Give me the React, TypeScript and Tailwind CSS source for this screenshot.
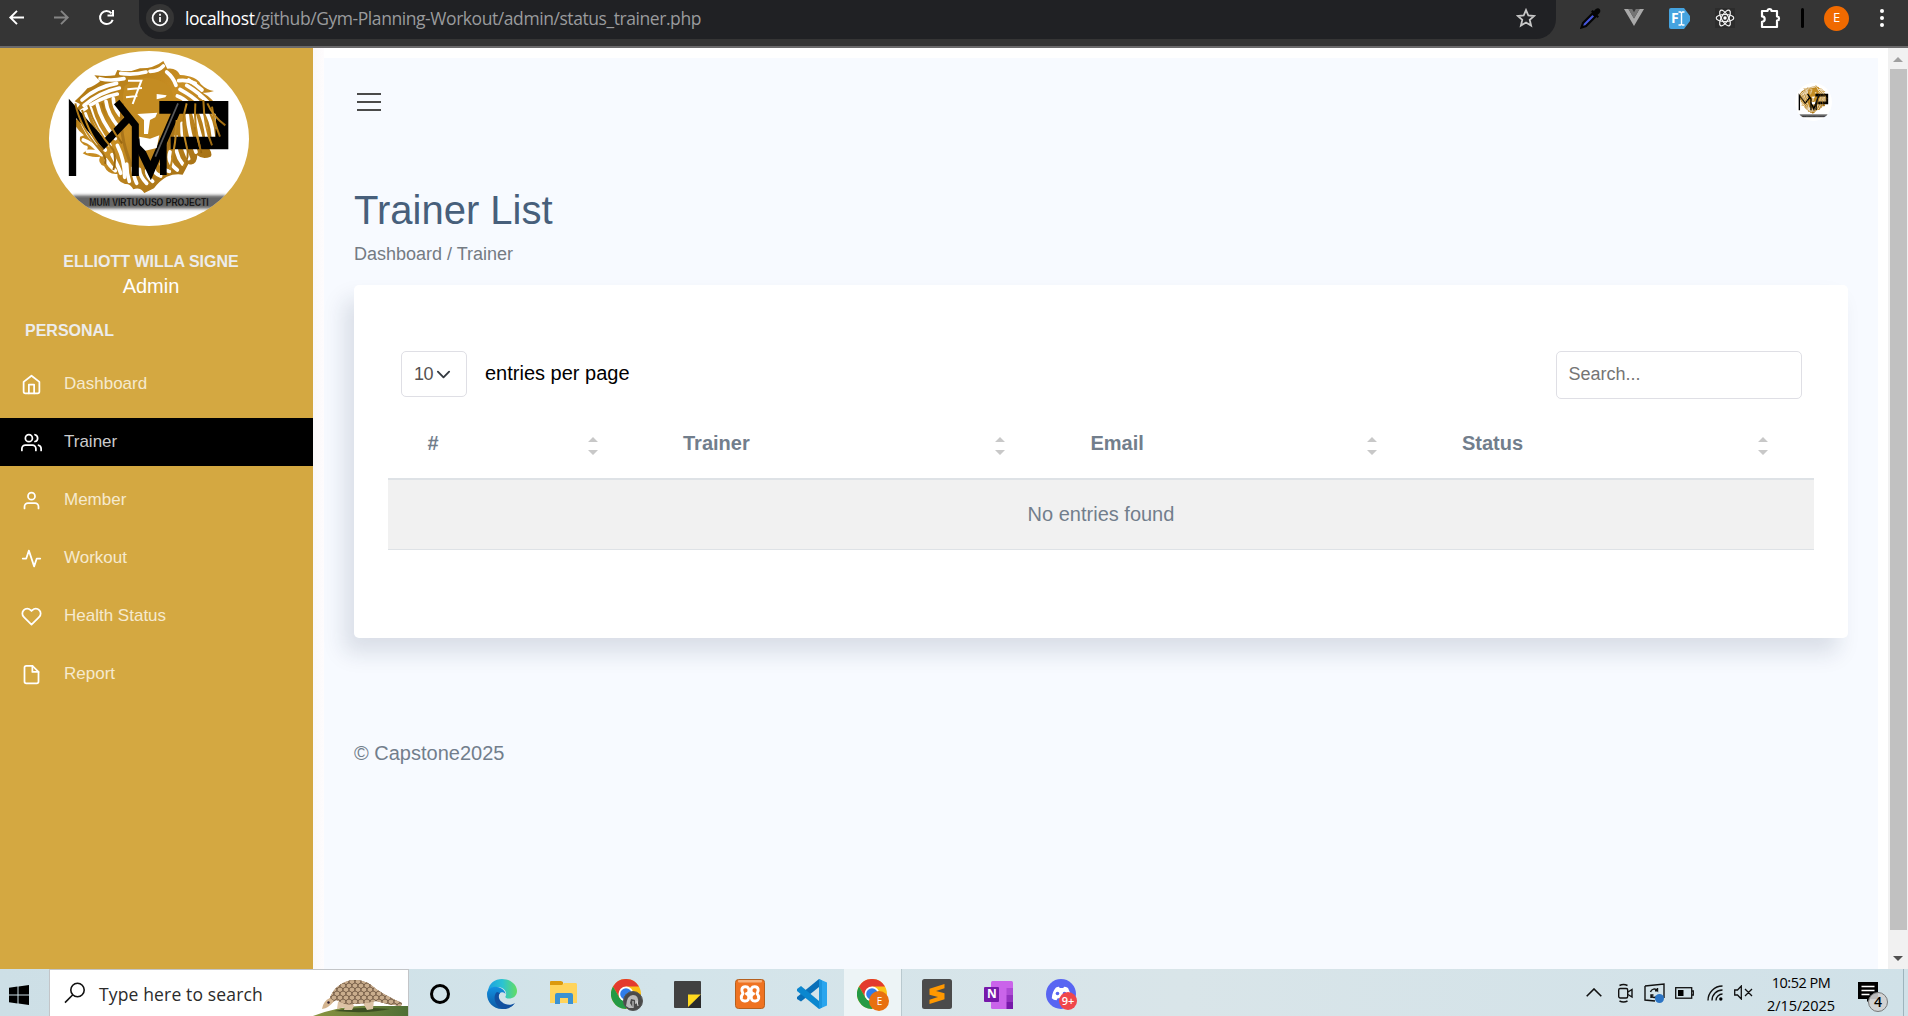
import React from 'react';

const SANS = "font-['Liberation_Sans',Arial,sans-serif]";
const UI = "font-['Open_Sans','Noto_Sans',sans-serif]";

const manePath =
  'M490 63 L502 86 Q530 82 540 105 Q590 108 602 132 Q620 150 642 153 Q625 160 608 158 Q640 175 652 205 Q662 240 676 258 Q655 268 645 262 Q662 290 648 308 L622 318 Q640 340 632 350 Q608 360 592 346 Q590 380 565 372 L548 404 Q525 400 500 410 Q475 425 462 445 L433 459 Q420 440 400 448 Q390 430 375 432 Q350 425 352 402 Q325 405 312 378 Q292 370 300 350 Q275 355 248 340 Q268 328 262 318 Q235 310 240 290 L252 286 Q222 262 222 240 L240 236 Q215 220 218 208 Q235 205 240 192 L224 184 Q250 160 262 145 Q285 138 300 124 L283 106 Q320 110 345 106 L352 90 Q385 100 420 85 Q460 86 490 63Z';

const gaps = [
  'M300 116 Q330 124 372 116', 'M362 100 Q400 106 438 96', 'M450 94 Q475 94 490 78', 'M246 180 Q290 140 350 130',
  'M252 196 Q300 156 358 144', 'M244 214 Q300 172 352 162', 'M240 232 Q262 290 290 310', 'M256 222 Q274 280 316 330',
  'M272 206 Q286 262 330 316', 'M292 194 Q302 240 346 296', 'M318 184 Q322 220 356 262', 'M340 176 Q340 200 360 226',
  'M250 300 Q280 310 296 336', 'M262 334 Q290 332 306 344', 'M318 360 Q330 380 346 392',
  'M336 344 Q356 380 362 400', 'M352 316 Q374 360 374 412', 'M380 372 Q380 400 388 424',
  'M400 376 Q398 404 410 430', 'M418 388 Q420 410 440 430', 'M440 392 Q440 408 458 424', 'M462 384 Q460 400 482 408',
  'M484 372 Q486 390 508 394', 'M510 336 Q500 366 532 390', 'M528 290 Q522 340 548 372', 'M546 250 Q544 310 566 356',
  'M562 226 Q566 280 588 336', 'M578 206 Q590 250 604 300', 'M596 206 Q616 240 622 300', 'M612 206 Q636 240 640 290',
  'M632 206 Q646 230 654 250', 'M600 168 Q630 186 638 210', 'M560 136 Q600 160 622 186', 'M540 148 Q580 170 598 190',
  'M586 130 Q560 118 536 122', 'M500 96 Q520 112 528 136', 'M532 168 Q550 174 566 190', 'M566 120 Q590 136 606 150',
];

const strands = [
  'M226 190 Q240 262 300 330 Q320 350 316 372', 'M246 210 Q270 290 310 330', 'M264 196 Q286 270 340 330 Q350 360 340 390',
  'M306 190 Q320 250 366 310', 'M560 190 Q540 250 560 320 Q570 350 550 380', 'M586 190 Q580 250 604 340',
  'M610 180 Q612 260 636 316', 'M636 200 Q640 240 660 290', 'M530 240 Q530 300 510 390', 'M622 190 Q640 230 676 256', 'M584 262 L600 322',
];

function LionEmblem({ className, id }: { className: string; id: string }) {
  return (
    <svg viewBox="147 33 600 525" preserveAspectRatio="none" className={className}>
      <defs>
        <linearGradient id={id + 'g'} x1="0" y1="0" x2="1" y2="1">
          <stop offset="0" stopColor="#a8720f" />
          <stop offset="0.45" stopColor="#c98f24" />
          <stop offset="1" stopColor="#96640e" />
        </linearGradient>
        <clipPath id={id + 'c'}>
          <ellipse cx="447" cy="295.5" rx="300" ry="262.5" />
        </clipPath>
        <filter id={id + 'b'} x="-10%" y="-50%" width="120%" height="200%">
          <feGaussianBlur stdDeviation="5" />
        </filter>
      </defs>
      <ellipse cx="447" cy="295.5" rx="300" ry="262.5" fill="#fff" />
      <path d={manePath} fill={`url(#${id}g)`} />
      <g fill="none" stroke="#fff" strokeWidth="11" strokeLinecap="round">
        {gaps.map((d) => (
          <path key={d} d={d} />
        ))}
      </g>
      <path d="M374 138 Q440 90 508 138 Q530 175 515 230 L500 270 Q470 300 450 290 Q410 300 385 260 Q358 200 374 138Z" fill="#c48c22" />
      <path d="M368 190 Q352 280 396 380 M520 190 Q536 240 500 330" stroke="#a8741a" strokeWidth="9" fill="none" />
      <g fill="none" stroke="#000" strokeLinejoin="miter">
        <polyline points="217.500,408 217.500,205 312,312 392,228" strokeWidth="22" />
        <polyline points="350,186 406,256 406,408" strokeWidth="21" />
        <polyline points="408,300 452,392 540,188" strokeWidth="24" />
        <polyline points="490,405 490,310" strokeWidth="20" />
        <polyline points="478,202 666,202 666,309 512,309" strokeWidth="38" />
      </g>
      <path d="M534 190 L466 350" stroke="#5a5a5a" strokeWidth="5" />
      <path d="M384 122 L424 122 L398 192 M382 148 L426 144 M378 172 L412 168" stroke="#fff" strokeWidth="6" fill="none" />
      <path d="M470 162 L500 166 L496 172 L470 178Z M412 222 L472 218 L466 232 L450 240 L444 282 L432 282 L432 240Z" fill="#fff" />
      <path d="M418 290 L450 296 L478 286 L470 324 L436 332 L420 316Z" fill="#fff" />
      <g fill="none" stroke={`url(#${id}g)`} strokeWidth="6">
        {strands.map((d) => (
          <path key={d} d={d} />
        ))}
      </g>
      <g clipPath={`url(#${id}c)`}>
        <rect x="218" y="466" width="460" height="40" fill="#333" opacity="0.75" filter={`url(#${id}b)`} />
      </g>
      <text x="268" y="499" textLength="358" lengthAdjust="spacingAndGlyphs" fontFamily="Liberation Sans, Arial, sans-serif" fontWeight="700" fontSize="34" fill="#000" stroke="#6a6a6a" strokeWidth="1">
        MUM VIRTUOUSO PROJECTI
      </text>
    </svg>
  );
}

function BrowserBar() {
  return (
    <header className={`flex h-12 shrink-0 items-start border-b-2 border-[#6b6a6b] bg-[#353535] ${UI}`}>
      <div className="flex h-[36px] w-[139px] items-center gap-[27px] pl-[8px] text-white">
        <svg className="size-[18px]" viewBox="0 0 18 18" fill="none" stroke="#fff" strokeWidth="1.900">
          <path d="M16 8.500H2.500M9 1.800 2.300 8.500l6.700 6.700" />
        </svg>
        <svg className="size-[18px]" viewBox="0 0 18 18" fill="none" stroke="#858585" strokeWidth="1.900">
          <path d="M1 8.500h13.500M8 1.800l6.700 6.700L8 15.200" />
        </svg>
        <svg className="size-[18px]" viewBox="0 0 18 18" fill="none" stroke="#fff" strokeWidth="2">
          <path d="M14.700 10.800A6.500 6.500 0 1 1 13.500 4.300" />
          <path d="M15 1V6.500H9.500" />
        </svg>
      </div>
      <div className="flex h-[39px] w-[1417px] items-center rounded-b-[20px] bg-[#202124] pb-[3px] pl-[7px] pr-5">
        <span className="flex size-7 items-center justify-center rounded-full bg-[#353535]">
          <svg className="size-[18px]" viewBox="0 0 18 18" fill="none" stroke="#fff" strokeWidth="1.800">
            <circle cx="9" cy="9" r="7.400" />
            <path d="M9 8v5M9 4.800v1.900" />
          </svg>
        </span>
        <span className="ml-[11px] text-[17.500px] leading-6 whitespace-nowrap tracking-[-0.430px] text-[#9a9b9d]">
          <span className="text-white">localhost</span>/github/Gym-Planning-Workout/admin/status_trainer.php
        </span>
        <svg className="ml-auto size-5" viewBox="0 0 24 24" fill="none" stroke="#c7c7c7" strokeWidth="2.200">
          <path d="M12 2.500l2.800 6.500 7 .6-5.300 4.600 1.600 6.900L12 17.400l-6.100 3.700 1.600-6.900-5.300-4.600 7-.6z" />
        </svg>
      </div>
      <div className="flex h-[36px] items-center pl-[24px]">
        <svg className="size-[22px]" viewBox="0 0 22 22">
          <path d="M12.500 6.500 3 16l-1.500 4.500L6 19l9.500-9.500z" fill="#4757dd" stroke="#050505" strokeWidth="2.200" />
          <path d="M11 4.500l6.500 6.500 1.500-1.500-1.500-1.500C20 6 21 4.500 20 2.500 18.500.5 16 1 14 4l-1.300-1z" fill="#050505" />
        </svg>
        <svg className="ml-[21px] size-[22px]" viewBox="0 0 22 22">
          <path d="M1 2h4.500L11 11.500 16.500 2H21L11 19z" fill="#a9a9a9" />
          <path d="M5.500 2h3.700L11 5.200 12.800 2h3.700L11 11.500z" fill="#747474" />
        </svg>
        <span className="relative ml-[24px] flex h-[21px] w-[21px] items-center">
          <svg className="absolute inset-0 size-[21px]" viewBox="0 0 21 21">
            <path d="M2 0h13l6 8v5l-6 8H2a2 2 0 0 1-2-2V2a2 2 0 0 1 2-2z" fill="#45a3df" />
            <path d="M9.500 4h2l1 1 1-1h2M12.500 5v11M9.500 17h2l1-1 1 1h2" stroke="#fff" strokeWidth="1.400" fill="none" />
          </svg>
          <span className="relative pl-[2px] text-[14px] font-bold leading-none text-white">F</span>
        </span>
        <svg className="ml-[25px] size-[20px] bg-[#2c2c2c]" viewBox="-10 -10 20 20" fill="none" stroke="#f4f4f4" strokeWidth="1.200">
          <ellipse rx="8.800" ry="3.500" />
          <ellipse rx="8.800" ry="3.500" transform="rotate(60)" />
          <ellipse rx="8.800" ry="3.500" transform="rotate(120)" />
          <circle r="1.700" fill="#fff" stroke="none" />
        </svg>
        <svg className="ml-[25px] size-[22px]" viewBox="0 0 22 22" fill="none" stroke="#fff" strokeWidth="2.200" strokeLinejoin="round">
          <path d="M2 4h5.500a2 2 0 0 1 4 0H17v5.500a2 2 0 0 1 0 4V20H2v-5.200a2.700 2.700 0 0 0 0-5.400z" />
        </svg>
        <span className="ml-[19px] h-5 w-[3px] rounded bg-black" />
        <span className="ml-[20px] flex size-[25px] items-center justify-center rounded-full bg-[#f06a00] text-[13px] text-white">E</span>
        <span className="ml-[31px] flex flex-col gap-[3px]">
          <i className="size-1 rounded-full bg-white" />
          <i className="size-1 rounded-full bg-white" />
          <i className="size-1 rounded-full bg-white" />
        </span>
      </div>
    </header>
  );
}

const nav: { label: string; icon: React.ReactNode; active?: boolean }[] = [
  { label: 'Dashboard', icon: <><path d="M3 9l9-7 9 7v11a2 2 0 0 1-2 2H5a2 2 0 0 1-2-2z" /><path d="M9 22V12h6v10" /></> },
  {
    label: 'Trainer',
    active: true,
    icon: <><path d="M17 21v-2a4 4 0 0 0-4-4H5a4 4 0 0 0-4 4v2" /><circle cx="9" cy="7" r="4" /><path d="M23 21v-2a4 4 0 0 0-3-3.870M16 3.130a4 4 0 0 1 0 7.750" /></>,
  },
  { label: 'Member', icon: <><path d="M20 21v-2a4 4 0 0 0-4-4H8a4 4 0 0 0-4 4v2" /><circle cx="12" cy="7" r="4" /></> },
  { label: 'Workout', icon: <path d="M22 12h-4l-3 9L9 3l-3 9H2" /> },
  {
    label: 'Health Status',
    icon: <path d="M20.840 4.610a5.500 5.500 0 0 0-7.780 0L12 5.670l-1.060-1.060a5.500 5.500 0 0 0-7.780 7.780l1.060 1.060L12 21.230l7.780-7.780 1.060-1.060a5.500 5.500 0 0 0 0-7.780z" />,
  },
  { label: 'Report', icon: <><path d="M13 2H6a2 2 0 0 0-2 2v16a2 2 0 0 0 2 2h12a2 2 0 0 0 2-2V9z" /><path d="M13 2v7h7" /></> },
];

function Sidebar() {
  return (
    <aside className="flex w-[313px] shrink-0 flex-col bg-[#d4a841] pt-[3px]">
      <LionEmblem id="big" className="ml-[49px] h-[175px] w-[200px]" />
      <div className="mt-6 w-[302px] text-center leading-6">
        <p className="text-base leading-6 font-bold text-[#ececec]">ELLIOTT WILLA SIGNE</p>
        <p className="text-[20px] leading-6 text-white">Admin</p>
      </div>
      <p className="mt-[21px] pl-[25px] text-base leading-6 font-bold text-[#ececec]">PERSONAL</p>
      <nav className="mt-[17px] flex flex-col gap-[10px]">
        {nav.map((n) => (
          <a key={n.label} className={n.active ? 'flex h-12 items-center bg-black pl-[21px]' : 'flex h-12 items-center pl-[21px]'}>
            <svg className="size-[21px]" viewBox="0 0 24 24" fill="none" stroke="#fff" strokeWidth="2" strokeLinecap="round" strokeLinejoin="round">
              {n.icon}
            </svg>
            <span className={n.active ? 'ml-[22px] text-[17px] text-[#cccccc]' : 'ml-[22px] text-[17px] text-[#f6eacf]'}>{n.label}</span>
          </a>
        ))}
      </nav>
    </aside>
  );
}

const columns = ['#', 'Trainer', 'Email', 'Status'];

function TrainerCard() {
  return (
    <section className="mt-[17px] h-[353px] w-[1494px] rounded-[5px] bg-white px-[34px] pt-[66px] shadow-[-10px_15px_22px_0_rgba(25,42,70,0.13)]">
      <div className="flex h-12 items-start justify-between pr-3 pl-[13px]">
        <div className="flex items-center text-[20px] text-black">
          <span className="flex h-[46px] w-[66px] items-center rounded-[5px] border border-[#dfdfe5] pl-[12px] text-[18px] text-[#555252]">
            <span className="tracking-[-0.500px]">10</span>
            <svg className="ml-[3px] size-[15px]" viewBox="0 0 16 16" fill="none" stroke="#343a40" strokeWidth="2" strokeLinecap="round" strokeLinejoin="round">
              <path d="M2 5l6 6 6-6" />
            </svg>
          </span>
          <span className="-mt-[2px] ml-[18px]">entries per page</span>
        </div>
        <div className="flex h-12 w-[246px] items-center rounded-[5px] border border-[#dfdfe5] pb-[1px] pl-[11.500px] text-[18px] text-[#757575]">Search...</div>
      </div>
      <div className="mt-[9px] grid h-[72px] grid-cols-[255.500px_407.500px_371.500px_391.500px] border-b-2 border-[#dee2e6]">
        {columns.map((c) => (
          <div key={c} className="flex items-start pt-5 pr-[46px] pl-[39.500px] text-[20px] leading-[30px] font-bold text-[#727e8c]">
            {c}
            <svg className="mt-[9px] ml-auto h-[18px] w-[10px]" viewBox="0 0 10 18" fill="#c8c8c8">
              <path d="M0 5L5 0l5 5zM0 13h10l-5 5z" />
            </svg>
          </div>
        ))}
      </div>
      <div className="flex h-[70px] items-center justify-center border-b border-[#dee2e6] bg-[#f1f1f1] pb-[2px] text-[20px] text-[#727e8c]">No entries found</div>
    </section>
  );
}

function ChromeLogo({ children }: { children: React.ReactNode }) {
  return (
    <span className="relative size-[30px]">
      <svg className="size-[30px]" viewBox="-15 -15 30 30">
        <circle r="15" fill="#fbc116" />
        <path d="M-13 -7.500A15 15 0 0 1 13 -7.500L0 -7.500-6.500 3.700z" fill="#e33b2e" />
        <path d="M-13 -7.500A15 15 0 0 0 0 15L6.500 3.800-6.500 3.700z" fill="#249a45" />
        <circle r="7.500" fill="#fff" />
        <circle r="5.800" fill="#2f7de9" />
      </svg>
      {children}
    </span>
  );
}

const scaleRows = [0, 1, 2, 3, 4, 5, 6, 7];
const scaleCols = [0, 1, 2, 3, 4, 5, 6, 7, 8, 9, 10, 11, 12, 13];

function Pangolin() {
  return (
    <svg className="h-[46px] w-[95px]" viewBox="313 970 95 46">
      <defs>
        <clipPath id="pangolinBody">
          <path d="M328 1005 Q330 994 336 988 Q346 979 357 980 Q368 981 376 989 Q386 996 402 1003 L401 1006 Q388 1005 376 1001 Q360 1005 345 1004 L336 1000Z" />
        </clipPath>
        <linearGradient id="pangolinHill" x1="0" x2="1">
          <stop stopColor="#8a9440" />
          <stop offset="1" stopColor="#4f6f35" />
        </linearGradient>
      </defs>
      <path d="M313 1016 Q345 1004 372 1006 H408 V1016Z" fill="url(#pangolinHill)" />
      <path d="M334 1011 Q355 1006 390 1009 Q370 1014 334 1011Z" fill="#3c4f22" />
      <path d="M338 1002h14l2 4-2 4h-8l1-3-8 2zM362 1001l12-1-1 9-6 1z" fill="#dcc2a4" />
      <g clipPath="url(#pangolinBody)">
        <rect x="320" y="976" width="86" height="34" fill="#8f7458" />
        <g fill="#c9ad8d" stroke="#6f5741" strokeWidth="0.8">
          {scaleRows.map((r) =>
            scaleCols.map((c) => <ellipse key={`${r}-${c}`} cx={325 + c * 6 + (r % 2) * 3} cy={978 + r * 4} rx="3" ry="2.900" />),
          )}
        </g>
      </g>
      <path d="M322 1009 Q323 1001 330 998 L334 1001 Q329 1008 322 1009Z" fill="#d3b48f" />
      <circle cx="328.500" cy="1002.500" r="1.200" fill="#2b1b30" />
    </svg>
  );
}

const apps: React.ReactNode[] = [
  <span className="size-5 rounded-full border-[3px] border-black" />,
  <svg className="size-[30px]" viewBox="0 0 30 30">
    <defs>
      <linearGradient id="edgeTop" x1="0" x2="1"><stop stopColor="#1c9fe0" /><stop offset="0.500" stopColor="#2bc3d2" /><stop offset="1" stopColor="#64dd62" /></linearGradient>
      <linearGradient id="edgeLow" x1="0" x2="0" y2="1"><stop stopColor="#1391e0" /><stop offset="1" stopColor="#0c59a4" /></linearGradient>
    </defs>
    <path d="M1 12C2 4 8 0 15 0c9 0 15 6 15 12 0 5-4 7.500-8 7.500-3 0-4-1-3.500-2C20.500 14 18 9 12 8 7 7.500 3 9 1 12z" fill="url(#edgeTop)" />
    <path d="M0 15C0 10 5 7 10 8c5 .5 8.500 4 8.500 7.500 0-3-7-4-7 2.500s6 9 11 8.500c2 0 4-1 5-2C25 28 20 30 15 30 6 30 0 23 0 15z" fill="url(#edgeLow)" />
    <path d="M10 13C5 17 8 29 17 30c5 0 9-3 11-6-4 3-10 2-13-1-3-2-4.500-6-2-9z" fill="#1150a0" />
  </svg>,
  <svg className="-mt-[3px] h-[24px] w-[28px]" viewBox="0 0 28 24">
    <path d="M0 1a1 1 0 0 1 1-1h10l2 1v3H0z" fill="#dc9a0e" />
    <path d="M0 4h12l2-2h12a2 2 0 0 1 1 2v18H0z" fill="#ffd45c" />
    <path d="M5 23V14a2 2 0 0 1 2-2h14a2 2 0 0 1 2 2v9h-5v-6h-8v6z" fill="#3a92d3" />
  </svg>,
  <ChromeLogo>
    <span className="absolute top-[12px] left-[12px] flex size-[20px] items-center justify-center rounded-full border border-[#555] bg-[#4a4a4a]">
      <svg className="size-[18px]" viewBox="0 0 18 18"><path d="M2 14Q3 3 9 3q6 0 5 8l-3 1V8L7 7l-1 4 3 5H5z" fill="#b9b9b9" /><path d="M9 9v7M13 9l1 5" stroke="#ddd" /></svg>
    </span>
  </ChromeLogo>,
  <svg className="size-[27px]" viewBox="0 0 27 27">
    <rect width="27" height="27" rx="1" fill="#414141" />
    <path d="M14 13.500h13L14 26z" fill="#ffd91f" />
    <path d="M27 13.500V27H14z" fill="#2b2b2b" />
  </svg>,
  <svg className="size-[30px]" viewBox="0 0 30 30">
    <rect x="0.500" y="0.500" width="29" height="29" rx="3" fill="#ef7321" stroke="#b5601f" />
    <rect x="3" y="1" width="24" height="2.500" rx="1" fill="#f7b07a" />
    <path d="M11.500 14.800h7M11.500 14.800c2.500-.5 3-3.500 2-5.500-1.200-2.300-5.500-2.200-6.500.5-.6 1.800 0 3.200 1 4.700-1.300 1.500-2 3-1.600 5 .7 2.800 5.200 3.500 6.700 1.200 1.300-2 1-5-1.600-5.900M18.500 14.800c-2.500-.5-3-3.500-2-5.500 1.200-2.300 5.500-2.200 6.500.5.600 1.800 0 3.200-1 4.700 1.300 1.500 2 3 1.600 5-.7 2.800-5.200 3.500-6.700 1.200-1.300-2-1-5 1.600-5.900" fill="none" stroke="#fff" strokeWidth="3" strokeLinecap="round" strokeLinejoin="round" />
  </svg>,
  <svg className="size-[30px]" viewBox="0 0 30 30">
    <path d="M22 0l8 3.500v23L22 30z" fill="#2aa5ee" />
    <path d="M22 0v8L4 22.500 0 20v-2z" fill="#0a6fb8" />
    <path d="M0 10l4-3 18 15v8L0 12z" fill="#0b87cf" />
    <path d="M22 0l3 1.500v27L22 30z" fill="#1c95de" />
  </svg>,
  <ChromeLogo>
    <span className="absolute top-[12px] left-[12px] flex size-[20px] items-center justify-center rounded-full bg-[#e8700f] text-[10px] text-white">E</span>
  </ChromeLogo>,
  <svg className="size-[30px]" viewBox="0 0 30 30">
    <rect width="30" height="30" rx="2.500" fill="#4b4b4b" />
    <path d="M22.500 5L7.500 9.700v6L16 18l-8.500 2.700V25l15-4.700v-6L14 12l8.500-2.700z" fill="#ff9800" />
  </svg>,
  <span className="relative size-[29px]">
    <svg className="size-[29px]" viewBox="0 0 29 29">
      <rect x="7" y="1" width="22" height="28" rx="1.500" fill="#ca64ea" />
      <path d="M22.500 8H29v7h-6.500z" fill="#ae4bd5" />
      <path d="M22.500 15H29v7h-6.500z" fill="#9332bf" />
      <path d="M22.500 22H29v7h-6.500z" fill="#7719aa" />
    </svg>
    <span className="absolute top-[7px] left-0 flex size-[15px] items-center justify-center rounded-[1px] bg-[#7719aa] text-[12px] font-bold text-white">N</span>
  </span>,
  <span className="relative size-[30px]">
    <svg className="size-[30px]" viewBox="0 0 30 30">
      <circle cx="15" cy="15" r="15" fill="#5865f2" />
      <path d="M10 8.500q2-1 3-.8l.7 1.300h3.600l.7-1.300q2 0 4 1.300 3 5 2.800 10-2 2-4.500 2.300l-1.300-2h-7.300l-1.200 2Q7.500 21 5.800 19.200 6 13 10 8.500z" fill="#fff" />
      <circle cx="11.500" cy="14.500" r="1.800" fill="#5865f2" />
      <circle cx="18.500" cy="14.500" r="1.800" fill="#5865f2" />
    </svg>
    <span className="absolute top-[13px] left-[13px] flex size-[18px] items-center justify-center rounded-full bg-[#f0474b] text-[11px] font-semibold text-white">9+</span>
  </span>,
];

function Taskbar() {
  return (
    <footer className={`flex h-[47px] shrink-0 items-stretch bg-[linear-gradient(90deg,#cddfe6_0%,#d3e4ea_35%,#d9e5e9_62%,#d0e1e8_100%)] text-black ${UI}`}>
      <div className="flex w-[49px] items-center pt-1 pl-[9px]">
        <svg className="size-5" viewBox="0 0 20 20">
          <path d="M0 2.800L8.500 1.600V9.500H0zM9.500 1.500L20 0v9.500H9.500zM0 10.500h8.500v7.900L0 17.200zM9.500 10.500H20V20L9.500 18.500z" />
        </svg>
      </div>
      <div className="flex w-[360px] items-center border-t border-r border-l border-[#c3c5c8] bg-white pl-[14px]">
        <svg className="size-[22px]" viewBox="0 0 22 22" fill="none" stroke="#111" strokeWidth="1.600">
          <circle cx="13.500" cy="8" r="6.700" />
          <path d="M8.800 12.800L1 20.600" />
        </svg>
        <span className="mt-[2px] ml-[13px] text-[17.500px] whitespace-nowrap tracking-[0.150px] text-[#2b2b2b]">Type here to search</span>
        <span className="ml-auto"><Pangolin /></span>
      </div>
      <div className="flex w-[683px] pl-[1px]">
        {apps.map((a, i) => (
          <div
            key={i}
            className={
              i === 7
                ? 'mr-[4px] ml-[2px] flex w-[58px] items-center justify-center border-r border-[#b9c9cf] bg-[#edf4f6] pt-[3px]'
                : i === 0
                  ? 'flex w-[60px] items-center justify-center pt-[3px]'
                  : i < 7
                    ? 'flex w-[62.200px] items-center justify-center pt-[3px] pl-[2px]'
                    : 'flex w-[62.200px] items-center justify-center pt-[3px]'
            }
          >
            {a}
          </div>
        ))}
      </div>
      <div className="ml-auto flex items-center">
        <svg className="h-[9px] w-[16px]" viewBox="0 0 16 9" fill="none" stroke="#111" strokeWidth="1.600"><path d="M.7 8.300L8 1l7.300 7.300" /></svg>
        <svg className="ml-[16px] h-[20px] w-[15px]" viewBox="0 0 15 20" fill="none" stroke="#111" strokeWidth="1.400">
          <rect x="0.700" y="5.500" width="9" height="9.500" rx="1.500" /><path d="M10 9l4-2.500v7.500l-4-2.500M1.500 2.500Q5.500.5 9.500 2.500M1.500 18Q5.500 20 9.500 18" />
        </svg>
        <svg className="ml-[11px] h-[20px] w-[21px]" viewBox="0 0 21 20" fill="none" stroke="#111" strokeWidth="1.400">
          <path d="M1 3L20 1v14M1 3v14l10 1M6.500 9a4 4 0 0 1 7-1.500V5M13.500 7.700H11M7 15v-3h2.500M7 12.500a4 4 0 0 0 5 1.500" /><circle cx="15.500" cy="15.500" r="4.500" fill="#2b74c4" stroke="none" />
        </svg>
        <svg className="ml-[10px] h-[12px] w-[19px]" viewBox="0 0 19 12" fill="none" stroke="#111" strokeWidth="1.300">
          <rect x="0.700" y="0.700" width="16" height="10.500" /><path d="M17 4h1.300v4H17" /><rect x="3" y="3" width="5.500" height="6" fill="#000" stroke="none" />
        </svg>
        <svg className="ml-[13px] size-4" viewBox="0 0 16 16" fill="none" stroke="#111" strokeWidth="1.400">
          <path d="M1 15.500A14.500 14.500 0 0 1 15.500 1M5 15.500A10.500 10.500 0 0 1 15.500 5M9 15.500A6.500 6.500 0 0 1 15.500 9" /><circle cx="13.800" cy="14" r="1.700" fill="#000" stroke="none" />
        </svg>
        <svg className="ml-[11px] h-[15px] w-[19px]" viewBox="0 0 19 15" fill="none" stroke="#111" strokeWidth="1.300">
          <path d="M.7 5h2.800L7.300 1v13L3.500 10H.7zM11 4l7 7M18 4l-7 7" />
        </svg>
        <div className="ml-[12px] w-[72px] pt-[2px] text-center text-[14.500px] leading-[23px] whitespace-nowrap">
          <p className="tracking-[-0.500px]">10:52 PM</p>
          <p className="tracking-[-0.100px]">2/15/2025</p>
        </div>
        <div className="relative ml-[21px] h-[22px] w-[45px]">
          <svg className="h-[20px] w-5" viewBox="0 0 20 20">
            <path d="M0 0h20v17h-8l-3 3v-3H0z" /><path d="M3.500 4.500h13M3.500 8.500h13M3.500 12.500h8" stroke="#fff" strokeWidth="1.300" />
          </svg>
          <span className="absolute top-[10px] left-[10px] flex size-[20px] items-center justify-center rounded-full border border-[#777] bg-[#d0d0d0]/90 text-[14px] font-semibold">4</span>
        </div>
        <span className="h-full w-[5px] border-l border-[#9eb4bd]" />
      </div>
    </footer>
  );
}

export default function App() {
  return (
    <div className={`flex h-[1016px] w-[1908px] flex-col overflow-hidden bg-white ${SANS}`}>
      <BrowserBar />
      <div className="flex h-[921px] shrink-0 overflow-hidden">
        <Sidebar />
        <div className="w-[11px] shrink-0 bg-[linear-gradient(90deg,#faf8f9,#fefcfd)]" />
        <main className="mt-[10px] mr-[10px] w-[1554px] overflow-hidden bg-[#f7faff] pl-[30px]">
          <div className="flex h-[88px] items-center justify-between pr-[46px] pl-[3px]">
            <div className="flex w-6 flex-col gap-[6px]">
              <i className="h-[2px] bg-[#4a4a4a]" />
              <i className="h-[2px] bg-[#4a4a4a]" />
              <i className="h-[2px] bg-[#4a4a4a]" />
            </div>
            <LionEmblem id="small" className="h-[38px] w-[37px]" />
          </div>
          <h1 className="mt-[40px] text-[40px] leading-[48px] text-[#475f7b]">Trainer List</h1>
          <p className="mt-[7px] text-[18px] leading-[27px] text-[#747b83]">Dashboard / Trainer</p>
          <TrainerCard />
          <p className="mt-[100px] text-[20px] leading-[30px] text-[#727e8c]">© Capstone2025</p>
        </main>
        <div className="flex w-5 flex-col items-center bg-[#f1f1f1] py-[8px]">
          <svg className="mt-[1px] h-[5px] w-[10px]" viewBox="0 0 10 5" fill="#a0a0a0"><path d="M0 5L5 0l5 5z" /></svg>
          <div className="mt-[7px] h-[861px] w-[17px] bg-[#c1c1c1]" />
          <svg className="mt-[26px] h-[5px] w-[10px]" viewBox="0 0 10 5" fill="#505050"><path d="M0 0h10L5 5z" /></svg>
        </div>
      </div>
      <Taskbar />
    </div>
  );
}
